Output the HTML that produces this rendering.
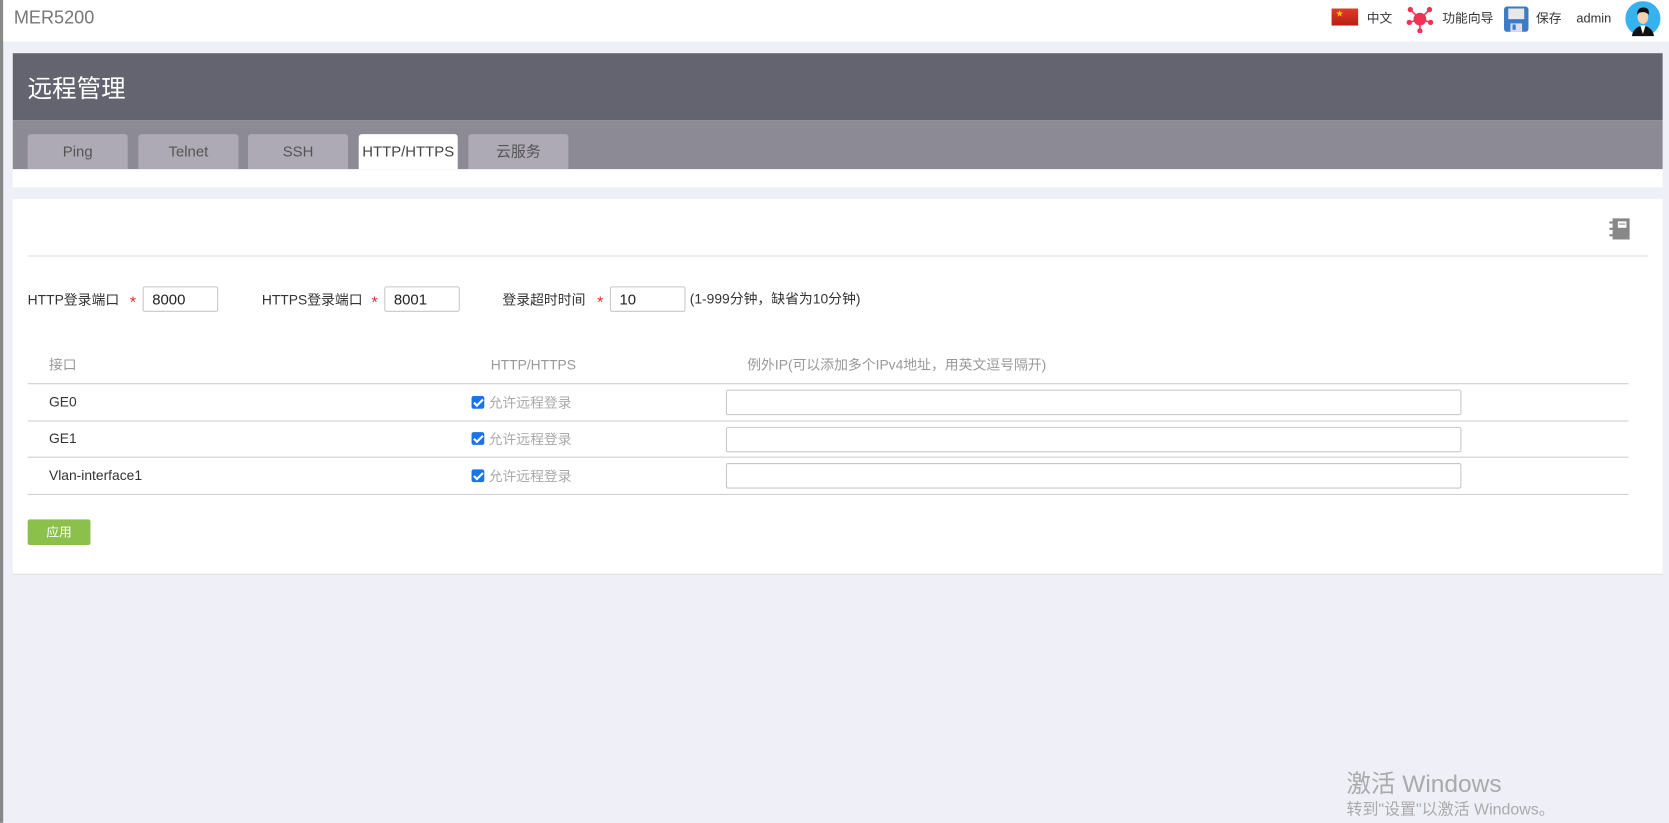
<!DOCTYPE html>
<html><head><meta charset="utf-8"><style>
*{margin:0;padding:0;box-sizing:border-box}
html,body{width:1669px;height:823px;overflow:hidden;background:#eeeff7}
#w{position:absolute;left:0;top:0;width:1568px;height:773px;transform:scale(1.06441);transform-origin:0 0;font-family:"Liberation Sans","Noto Sans CJK SC",sans-serif;background:#eeeff7}
.a{position:absolute}
.t{position:absolute;white-space:nowrap;font-size:13px;color:#333;line-height:16px}
.inp{position:absolute;border:1px solid #c8c8c8;background:#fff;border-radius:2px;height:24px;font-size:14px;color:#222;padding-left:8px;line-height:22px}
.tab{position:absolute;top:126px;width:94px;height:33px;background:#adaab5;border-radius:3px 3px 0 0;color:#555;font-size:14px;text-align:center;line-height:33px}
.cb{position:absolute;width:12px;height:12px;background:#1a73e8;border-radius:2px}
.cb:after{content:"";position:absolute;left:4px;top:1px;width:3px;height:7px;border:solid #fff;border-width:0 2px 2px 0;transform:rotate(45deg)}
.line{position:absolute;left:26px;width:1504px;height:1px;background:#cfcfcf}
</style></head><body><div id="w">
<div class="a" style="left:0;top:0;width:3px;height:773px;background:#888"></div>
<div class="a" style="left:3px;top:0;width:1565px;height:39px;background:#fff"></div>
<div class="t" style="left:13px;top:7px;font-size:17px;line-height:20px;color:#777">MER5200</div>
<!-- top right -->
<div class="a" style="left:1251px;top:8px;width:25px;height:16px;background:linear-gradient(#e03a2a,#b81e14)"></div>
<div class="a" style="left:1255px;top:10px;color:#f8d400;font-size:7px;line-height:7px">★</div>
<div class="t" style="left:1284px;top:9px;font-size:12px">中文</div>
<svg class="a" style="left:1321px;top:5px" width="26" height="26" viewBox="0 0 26 26"><g stroke="#ee3355" stroke-width="1.5"><line x1="13" y1="13" x2="4" y2="4"/><line x1="13" y1="13" x2="22" y2="4"/><line x1="13" y1="13" x2="3" y2="16"/><line x1="13" y1="13" x2="23" y2="16"/><line x1="13" y1="13" x2="13" y2="24"/></g><g fill="#ee3355"><circle cx="13" cy="13" r="6"/><circle cx="4" cy="4" r="2.5"/><circle cx="22" cy="4" r="2.5"/><circle cx="3" cy="16" r="2.5"/><circle cx="23" cy="16" r="2.5"/><circle cx="13" cy="24" r="2.5"/></g></svg>
<div class="t" style="left:1355px;top:9px;font-size:12px">功能向导</div>
<svg class="a" style="left:1413px;top:6px" width="23" height="24" viewBox="0 0 23 24"><rect width="23" height="24" rx="3" fill="#3b7cc4"/><rect x="4" y="2" width="15" height="10" fill="#e8e8e8"/><rect x="6" y="16" width="11" height="8" fill="#dde"/><rect x="8" y="17" width="3" height="5" fill="#3b7cc4"/></svg>
<div class="t" style="left:1443px;top:9px;font-size:12px">保存</div>
<div class="t" style="left:1481px;top:9px;font-size:12px">admin</div>
<svg class="a" style="left:1527px;top:1px" width="33" height="33" viewBox="0 0 33 33"><circle cx="16.5" cy="16.5" r="16.5" fill="#36b3ef"/><path d="M6 33 Q8 24 16.5 23 Q25 24 27 33Z" fill="#111"/><path d="M14 23 L16.5 31 L19 23Z" fill="#fff"/><ellipse cx="16.5" cy="15" rx="5" ry="6.5" fill="#f2d2b0"/><path d="M11 13 Q11 6 17 6 Q23 6 22 13 Q19 9 13 11Z" fill="#111"/></svg>
<!-- header -->
<div class="a" style="left:12px;top:50px;width:1550px;height:63px;background:#636470"></div>
<div class="t" style="left:26px;top:70px;font-size:23px;line-height:26px;color:#fff">远程管理</div>
<div class="a" style="left:12px;top:113px;width:1550px;height:46px;background:#8c8a94"></div>
<div class="tab" style="left:26px">Ping</div>
<div class="tab" style="left:130px">Telnet</div>
<div class="tab" style="left:233px">SSH</div>
<div class="tab" style="left:337px;background:#fff;color:#444;width:93px">HTTP/HTTPS</div>
<div class="tab" style="left:440px">云服务</div>
<div class="a" style="left:12px;top:159px;width:1550px;height:17px;background:#fff"></div>
<!-- panel -->
<div class="a" style="left:12px;top:187px;width:1550px;height:353px;background:#fff;border-bottom:1px solid #ddd"></div>
<svg class="a" style="left:1511px;top:205px" width="21" height="20" viewBox="0 0 21 20"><rect x="4" y="0" width="16" height="20" fill="#888"/><rect x="9" y="3" width="8" height="6" fill="#fff"/><rect x="10" y="5" width="6" height="1" fill="#888"/><g fill="#888"><rect x="1" y="3" width="4" height="2"/><rect x="1" y="9" width="4" height="2"/><rect x="1" y="15" width="4" height="2"/></g></svg>
<div class="a" style="left:26px;top:240px;width:1522px;height:1px;background:#ddd"></div>
<div class="t" style="left:26px;top:274px">HTTP登录端口</div>
<div class="t" style="left:122px;top:277px;color:#e22;font-size:15px">*</div>
<div class="inp" style="left:134px;top:269px;width:71px">8000</div>
<div class="t" style="left:246px;top:274px">HTTPS登录端口</div>
<div class="t" style="left:349px;top:277px;color:#e22;font-size:15px">*</div>
<div class="inp" style="left:361px;top:269px;width:71px">8001</div>
<div class="t" style="left:472px;top:274px">登录超时时间</div>
<div class="t" style="left:561px;top:277px;color:#e22;font-size:15px">*</div>
<div class="inp" style="left:573px;top:269px;width:71px">10</div>
<div class="t" style="left:648px;top:273px">(1-999分钟，缺省为10分钟)</div>
<!-- table -->
<div class="t" style="left:46px;top:335px;color:#999">接口</div>
<div class="t" style="left:461px;top:335px;color:#999">HTTP/HTTPS</div>
<div class="t" style="left:702px;top:335px;color:#999">例外IP(可以添加多个IPv4地址，用英文逗号隔开)</div>
<div class="line" style="top:360px"></div>
<div class="line" style="top:395px"></div>
<div class="line" style="top:429px"></div>
<div class="line" style="top:464px"></div>
<div class="t" style="left:46px;top:370px">GE0</div>
<div class="t" style="left:46px;top:404px">GE1</div>
<div class="t" style="left:46px;top:439px">Vlan-interface1</div>
<div class="cb" style="left:443px;top:372px"></div><div class="t" style="left:459px;top:371px;color:#aaa">允许远程登录</div>
<div class="cb" style="left:443px;top:406px"></div><div class="t" style="left:459px;top:405px;color:#aaa">允许远程登录</div>
<div class="cb" style="left:443px;top:441px"></div><div class="t" style="left:459px;top:440px;color:#aaa">允许远程登录</div>
<div class="inp" style="left:682px;top:366px;width:691px"></div>
<div class="inp" style="left:682px;top:401px;width:691px"></div>
<div class="inp" style="left:682px;top:435px;width:691px"></div>
<div class="a" style="left:26px;top:488px;width:59px;height:24px;background:#8bc04a;border-radius:2px;color:#fff;font-size:12px;text-align:center;line-height:24px">应用</div>
<div class="t" style="left:1265px;top:722px;font-size:23px;line-height:28px;color:#aaa">激活 Windows</div>
<div class="t" style="left:1265px;top:752px;font-size:15px;line-height:18px;color:#aaa">转到"设置"以激活 Windows。</div>
</div></body></html>
